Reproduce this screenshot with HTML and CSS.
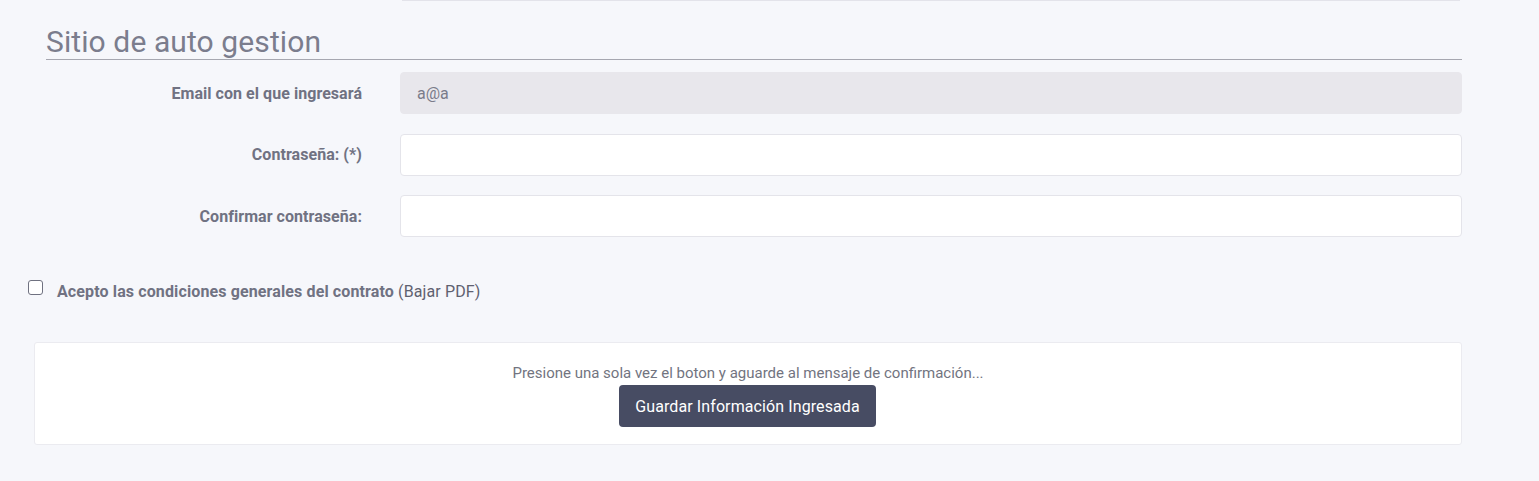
FILE: index.html
```html
<!DOCTYPE html>
<html lang="es">
<head>
<meta charset="utf-8">
<title>Sitio de auto gestion</title>
<link rel="stylesheet" href="styles.css">
</head>
<body>
<div class="prev-field"></div>
<section class="section">
  <h2 class="section-title">Sitio de auto gestion</h2>
  <div class="form-grid">
    <label class="form-label">Email con el que ingresará</label>
    <div class="form-input form-input--disabled">a@a</div>
    <label class="form-label">Contraseña: (*)</label>
    <div class="form-input"></div>
    <label class="form-label">Confirmar contraseña:</label>
    <div class="form-input"></div>
  </div>
</section>
<div class="terms">
  <span class="checkbox"></span>
  <span class="terms-text"><strong>Acepto las condiciones generales del contrato</strong> (Bajar PDF)</span>
</div>
<div class="submit-card">
  <p class="submit-note">Presione una sola vez el boton y aguarde al mensaje de confirmación...</p>
  <button class="submit-btn">Guardar Información Ingresada</button>
</div>
</body>
</html>
```
FILE: styles.css
```css
* { box-sizing: border-box; }
html, body {
  margin: 0;
  padding: 0;
  background: #f6f7fb;
  font-family: Roboto, "Liberation Sans", sans-serif;
  color: #6c6e7e;
}
.prev-field {
  margin-left: 402px;
  width: 1058px;
  height: 1px;
  background: #e3e3ea;
}
.section {
  margin-left: 46px;
  width: 1416px;
}
.section-title {
  margin: 0;
  padding-top: 23px;
  font-size: 30px;
  font-weight: 400;
  line-height: 35px;
  letter-spacing: 0.1px;
  color: #7b7d8d;
  border-bottom: 1px solid #a6a7b0;
}
.form-grid {
  display: grid;
  grid-template-columns: 316px 1062px;
  column-gap: 38px;
  row-gap: 19.5px;
  margin-top: 12px;
  align-items: center;
}
.form-label {
  text-align: right;
  font-size: 16px;
  font-weight: 700;
  letter-spacing: 0.05px;
  color: #707282;
}
.form-input {
  height: 42px;
  border: 1px solid #e4e4ea;
  border-radius: 4px;
  background: #ffffff;
  padding: 0 16px;
  display: flex;
  align-items: center;
  font-size: 16px;
  color: #7a7c8a;
}
.form-input--disabled {
  background: #e8e7ec;
  border-color: #e8e7ec;
}
.terms {
  display: flex;
  align-items: flex-start;
  margin-top: 44px;
  margin-left: 28px;
  height: 22px;
}
.checkbox {
  width: 15px;
  height: 15px;
  margin-top: -1px;
  border: 1px solid #6f7180;
  border-radius: 3px;
  background: #fff;
}
.terms-text {
  margin-left: 14px;
  font-size: 16px;
  line-height: 22px;
  letter-spacing: 0.12px;
  color: #5f6170;
}
.terms-text strong {
  color: #707282;
}
.submit-card {
  margin: 39px 0 0 34px;
  width: 1428px;
  height: 103px;
  background: #ffffff;
  border: 1px solid #ebebf0;
  border-radius: 3px;
  display: flex;
  flex-direction: column;
  align-items: center;
  padding-top: 20px;
}
.submit-note {
  margin: 0;
  font-size: 15px;
  line-height: 20px;
  color: #72747f;
}
.submit-btn {
  margin-top: 2px;
  margin-right: 1px;
  width: 257px;
  height: 42px;
  border: none;
  border-radius: 4px;
  background: #474c63;
  color: #ffffff;
  font-family: Roboto, "Liberation Sans", sans-serif;
  font-size: 16px;
  letter-spacing: 0.1px;
}
```
